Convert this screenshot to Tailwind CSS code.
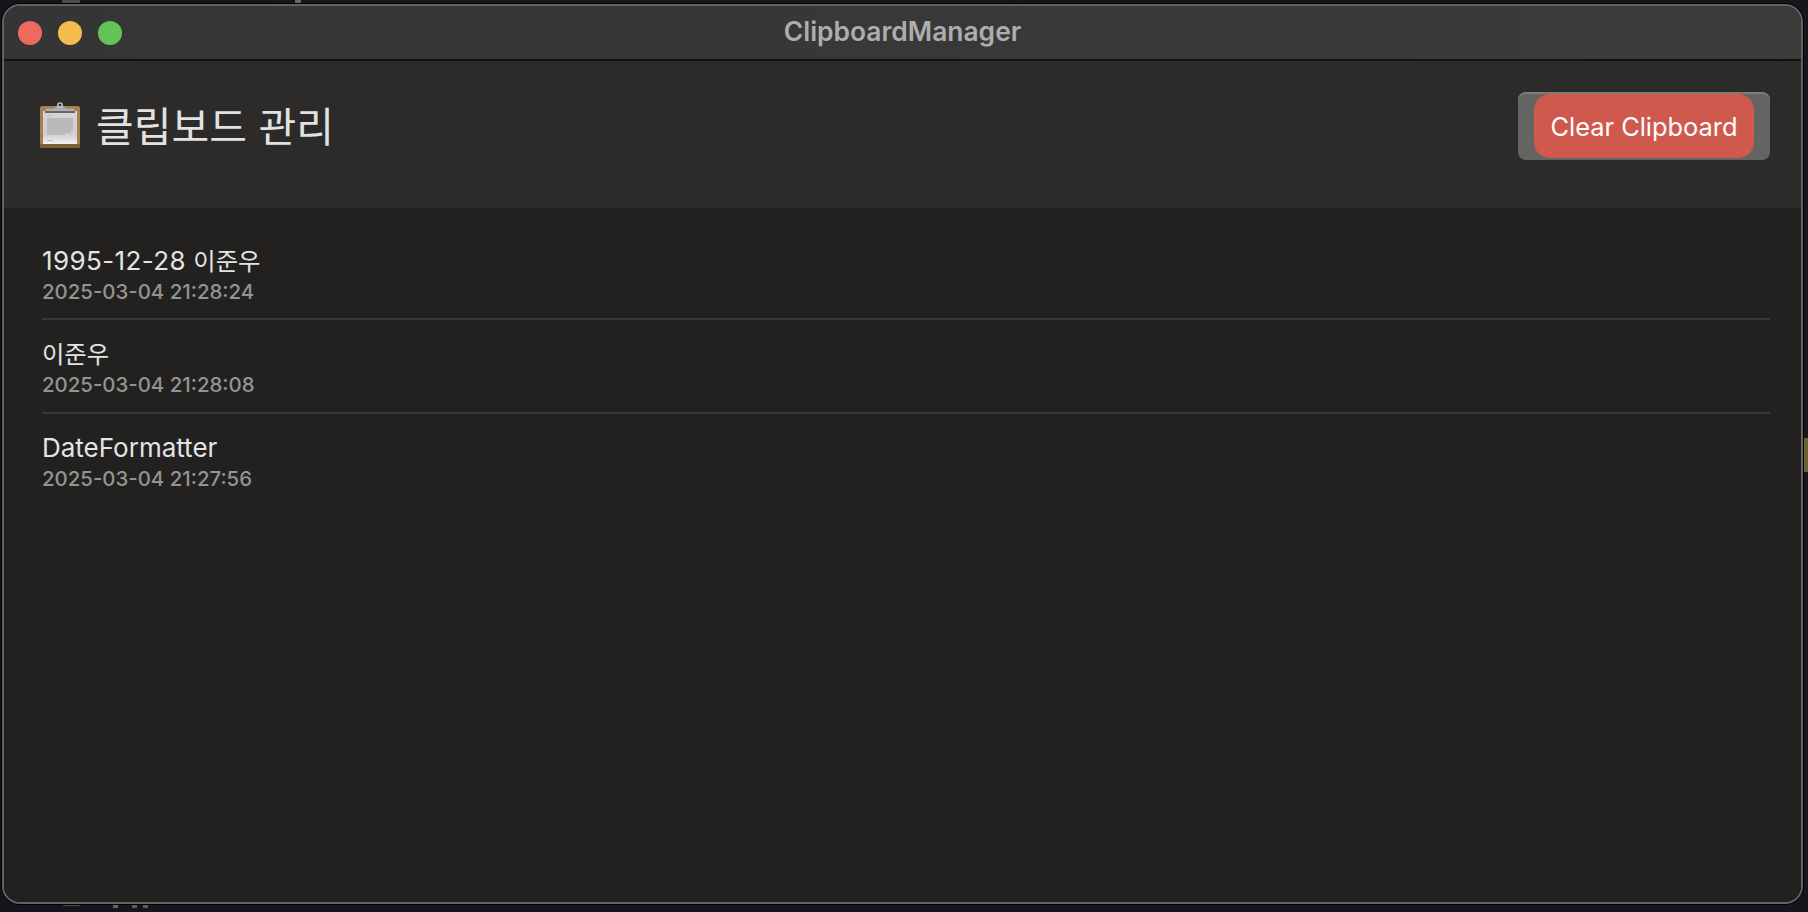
<!DOCTYPE html>
<html lang="ko">
<head>
  <meta charset="UTF-8">
  <meta name="viewport" content="width=device-width, initial-scale=1.0">
  <title>ClipboardManager</title>
  <script src="https://cdn.jsdelivr.net/npm/@tailwindcss/browser@4"></script>
</head>
<body class="relative h-[912px] w-[1808px] overflow-hidden bg-[#15161d] font-['Inter','Noto_Sans_CJK_KR',sans-serif]">
  <!-- bits of the editor behind the window -->
  <div class="absolute left-[62px] top-0 h-[3px] w-[18px] bg-[#6e6e6e]/60"></div>
  <div class="absolute left-[295px] top-0 h-[3px] w-[6px] bg-[#8a8a8a]/70"></div>
  <div class="absolute left-[63px] top-[905px] h-[1px] w-[17px] bg-[#6e6e6e]/60"></div>
  <div class="absolute left-[113px] top-[905px] h-[3px] w-[5px] bg-[#8a8a8a]/70"></div>
  <div class="absolute left-[132px] top-[905px] h-[3px] w-[5px] bg-[#8a8a8a]/60"></div>
  <div class="absolute left-[143px] top-[905px] h-[3px] w-[5px] bg-[#8a8a8a]/60"></div>
  <div class="absolute left-[1803px] top-[438px] h-[34px] w-[5px] bg-[#6b6330]"></div>

  <!-- Window -->
  <div class="absolute left-[2px] top-[4px] flex h-[900px] w-[1801px] flex-col overflow-hidden rounded-[18px] border-2 border-[#626262] shadow-[0_0_0_1px_#000]">
    <!-- Title bar -->
    <div class="relative flex h-[55px] shrink-0 items-center border-b-2 border-[#111] bg-linear-to-r from-[#353535] to-[#3b3b3b] pl-[14px]">
      <div class="flex gap-[16px]">
        <span class="h-[24px] w-[24px] rounded-full bg-[#ee6a5f]"></span>
        <span class="h-[24px] w-[24px] rounded-full bg-[#f5bd4f]"></span>
        <span class="h-[24px] w-[24px] rounded-full bg-[#61c454]"></span>
      </div>
      <div class="absolute inset-x-0 top-0 flex h-full items-center justify-center pb-[2px] text-[26.4px] font-semibold text-[#adadad]">ClipboardManager</div>
    </div>

    <!-- Header -->
    <div class="flex h-[147px] shrink-0 items-start justify-between bg-[#2c2b2a] pl-[35px] pr-[31px] pt-[31px]">
      <div class="flex items-start gap-[15px] pt-[10px]">
        <svg class="h-[46px] w-[42px]" viewBox="0 0 42 46">
          <defs>
            <linearGradient id="paper" x1="0" y1="0" x2="0" y2="1">
              <stop offset="0" stop-color="#d6d6d6"/>
              <stop offset="0.7" stop-color="#cfcfcf"/>
              <stop offset="1" stop-color="#f2f2f2"/>
            </linearGradient>
          </defs>
          <rect x="1" y="4" width="40" height="42" rx="2" fill="#a57f4f"/>
          <rect x="1" y="42" width="40" height="4" rx="1" fill="#7d5f38"/>
          <rect x="4" y="9" width="34" height="33" fill="url(#paper)"/>
          <!-- lines of small print on the sheet -->
          <g fill="#bababa">
            <rect x="8" y="13" width="5" height="1"/>
            <rect x="8" y="16" width="26" height="3"/>
            <rect x="8" y="19" width="26" height="3"/>
            <rect x="8" y="22" width="26" height="3"/>
            <rect x="8" y="25" width="26" height="3"/>
            <rect x="8" y="28" width="24" height="3"/>
            <rect x="8" y="31" width="18" height="2"/>
            <rect x="8" y="38" width="6" height="1"/>
          </g>
          <path d="M7 6.5 L35 6.5 L36 9 L6 9 Z" fill="#a9b0b8"/>
          <rect x="6" y="9" width="30" height="2" fill="#6f6558"/>
          <path d="M15 6.5 L18 4 L24 4 L27 6.5 Z" fill="#a9b0b8"/>
          <circle cx="21" cy="3.2" r="2.2" fill="none" stroke="#b8bec6" stroke-width="1.6"/>
        </svg>
        <h1 class="mt-[2px] text-[41px] leading-[46px] font-normal text-[#e2e2e2]">클립보드 관리</h1>
      </div>
      <div class="flex h-[68px] w-[252px] items-center justify-center rounded-[8px] bg-[#646462] shadow-[inset_0_2px_0_#7c7c7a]">
        <button class="h-[64px] w-[220px] rounded-[16px] bg-[#d0594e] pt-[2px] text-[25.4px] text-white">Clear Clipboard</button>
      </div>
    </div>

    <!-- List -->
    <div class="flex-1 bg-[#222120] pl-[38px] pr-[31px] pt-[19px]">
      <div class="h-[93.3px] border-b-2 border-[#3a3938] pt-[18px]">
        <p class="text-[26px] leading-[32px] text-[#e4e4e4]"><span class="tracking-[0.4px]">1995-12-28</span> <span class="text-[24.3px]">이준우</span></p>
        <p class="mt-[2px] text-[20.4px] leading-[26px] font-medium text-[#939393]">2025-03-04 21:28:24</p>
      </div>
      <div class="h-[93.3px] border-b-2 border-[#3a3938] pt-[18px]">
        <p class="text-[24.3px] leading-[32px] text-[#e4e4e4]">이준우</p>
        <p class="mt-[2px] text-[20.4px] leading-[26px] font-medium text-[#939393]">2025-03-04 21:28:08</p>
      </div>
      <div class="h-[93.3px] pt-[18px]">
        <p class="text-[26px] leading-[32px] text-[#e4e4e4]">DateFormatter</p>
        <p class="mt-[2px] text-[20.4px] leading-[26px] font-medium text-[#939393]">2025-03-04 21:27:56</p>
      </div>
    </div>
  </div>
</body>
</html>
